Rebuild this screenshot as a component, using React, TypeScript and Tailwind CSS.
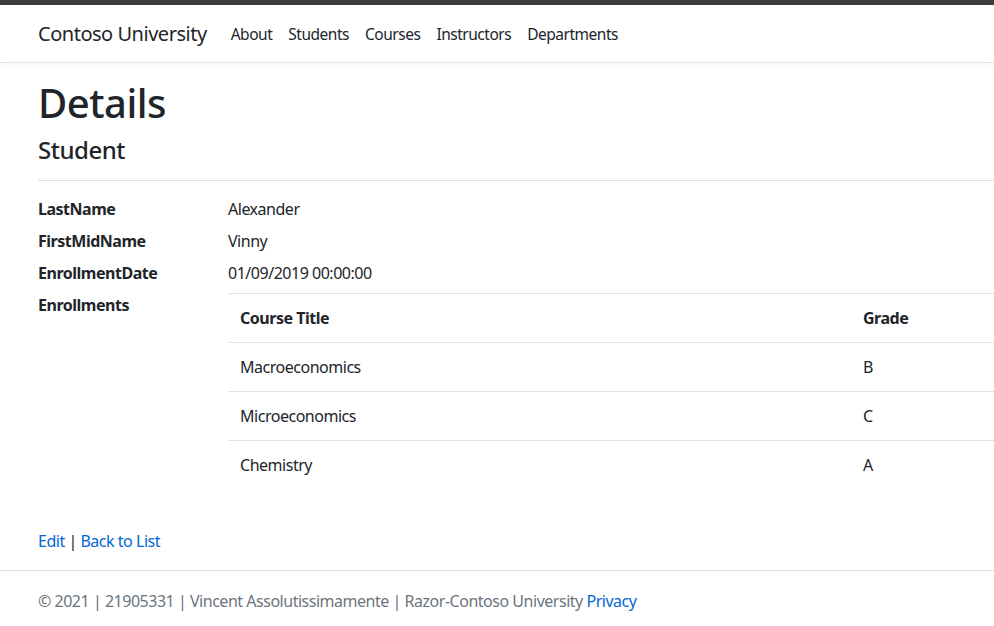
const font = { fontFamily: '"Noto Sans", "Open Sans", sans-serif' };

const navLinks = ['About', 'Students', 'Courses', 'Instructors', 'Departments'];

const enrollments = [
  { title: 'Macroeconomics', grade: 'B' },
  { title: 'Microeconomics', grade: 'C' },
  { title: 'Chemistry', grade: 'A' },
];

export default function App() {
  return (
    <div
      className="min-h-[626px] w-[994px] overflow-hidden bg-white text-[16px] leading-6 tracking-[-0.03em] text-[#212529]"
      style={font}
    >
      <div className="h-[5px] bg-[#3d3d3d]" />
      <header className="border-b border-[#e5e5e5] bg-white shadow-[0_2px_6px_rgba(0,0,0,0.05)]">
        <nav className="flex h-[57px] items-center pl-[38px]">
          <span className="mr-4 text-[20px] leading-[30px] text-[#212529]">Contoso University</span>
          <ul className="flex">
            {navLinks.map((l) => (
              <li key={l} className="px-2 text-[15.5px] text-[#212529]">
                {l}
              </li>
            ))}
          </ul>
        </nav>
      </header>

      <main className="mt-4 w-[1140px] pl-[38px]">
        <h1 className="mb-2 text-[40px] font-medium leading-[48px]">Details</h1>
        <div>
          <h4 className="mb-2 text-[24px] font-medium leading-[29px]">Student</h4>
          <hr className="my-4 border-t border-[#dfdfdf]" />
          <dl className="grid grid-cols-[190px_1fr]">
            <dt className="mb-2 font-bold">LastName</dt>
            <dd className="mb-2">Alexander</dd>
            <dt className="mb-2 font-bold">FirstMidName</dt>
            <dd className="mb-2">Vinny</dd>
            <dt className="mb-2 font-bold">EnrollmentDate</dt>
            <dd className="mb-2">01/09/2019 00:00:00</dd>
            <dt className="mb-2 font-bold">Enrollments</dt>
            <dd className="mb-2">
              <table className="mb-4 w-[920px] border-collapse">
                <thead>
                  <tr>
                    <th className="border-t border-b border-[#dee2e6] p-3 text-left font-bold">Course Title</th>
                    <th className="w-[297px] border-t border-b border-[#dee2e6] p-3 text-left font-bold">Grade</th>
                  </tr>
                </thead>
                <tbody>
                  {enrollments.map((e) => (
                    <tr key={e.title}>
                      <td className="border-t border-[#dee2e6] p-3">{e.title}</td>
                      <td className="border-t border-[#dee2e6] p-3">{e.grade}</td>
                    </tr>
                  ))}
                </tbody>
              </table>
            </dd>
          </dl>
        </div>
        <div className="mt-4">
          <a className="text-[#0366d6]">Edit</a> | <a className="text-[#0366d6]">Back to List</a>
        </div>
      </main>

      <footer className="mt-[17px] border-t border-[#dfdfdf] pl-[38px] leading-[60px] text-[#6c757d]">
        © 2021 | 21905331 | Vincent Assolutissimamente | Razor-Contoso University <a className="text-[#0366d6]">Privacy</a>
      </footer>
    </div>
  );
}
